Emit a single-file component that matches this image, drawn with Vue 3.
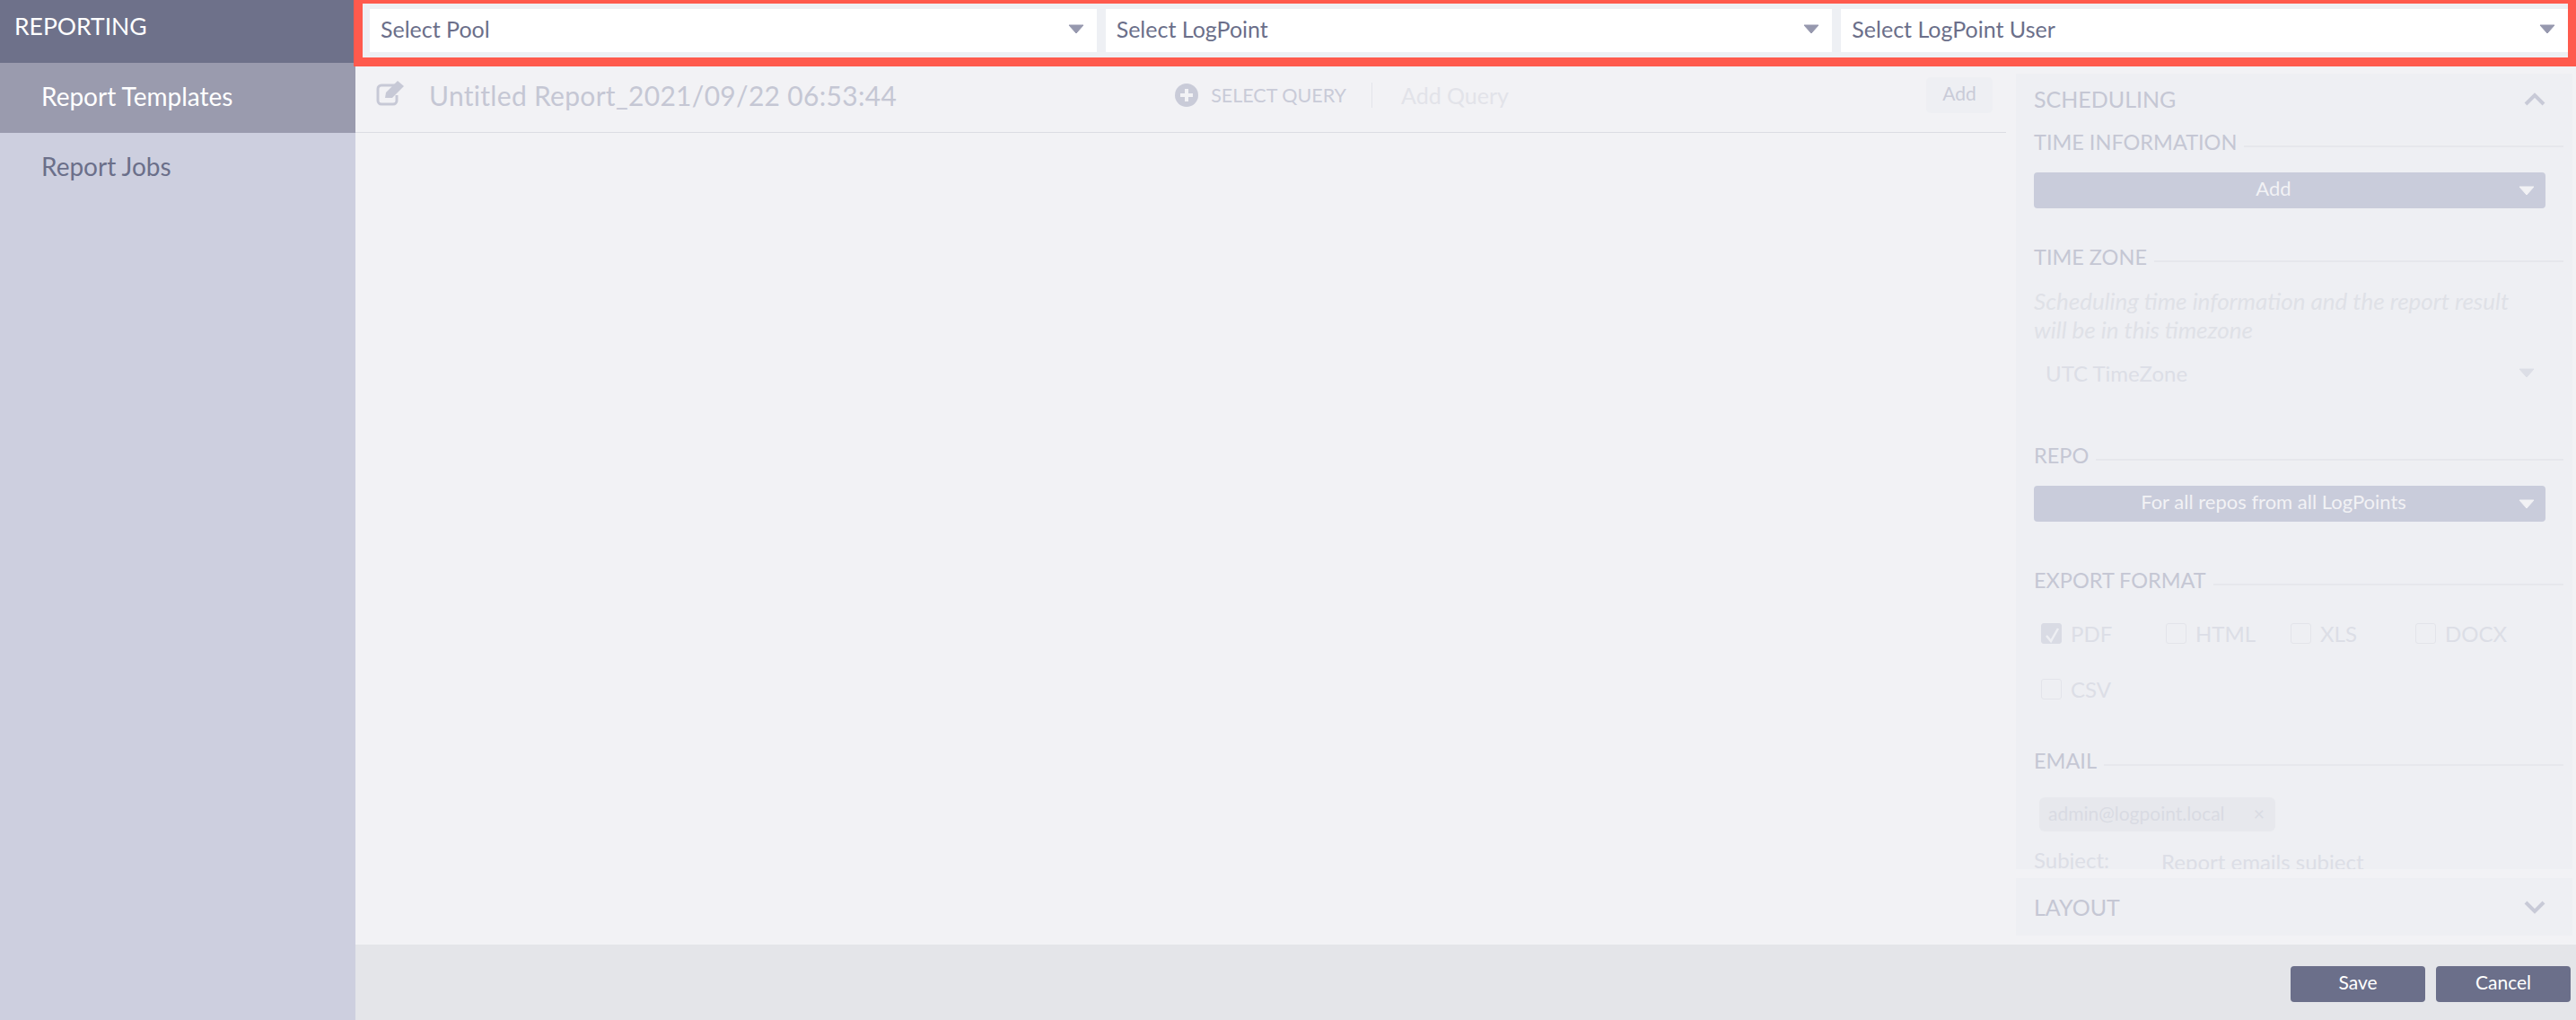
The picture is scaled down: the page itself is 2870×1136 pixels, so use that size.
<template>
  <div class="page">
    <aside class="sidebar">
      <div class="side-title">REPORTING</div>
      <a v-for="item in navItems" :key="item" class="nav-item" :class="{ active: item === 'Report Templates' }">{{ item }}</a>
    </aside>

    <div class="main">
      <!-- highlighted selector strip -->
      <div class="selector-bar">
        <div v-for="s in selectors" :key="s" class="selector">
          <span>{{ s }}</span>
          <svg class="arrow" width="18" height="11" viewBox="0 0 18 11"><path d="M1 1h16l-8 9z" fill="#9698ae" stroke="#9698ae" stroke-linejoin="round" /></svg>
        </div>
      </div>

      <div class="workspace">
        <section class="editor">
          <div class="editor-head">
            <svg class="edit-icon" width="32" height="29" viewBox="0 0 32 29" fill="none">
              <path d="M21 6H6a4 4 0 0 0-4 4v13a4 4 0 0 0 4 4h13a4 4 0 0 0 4-4v-6" stroke="#c7c9d6" stroke-width="3" />
              <path d="M10 20l1-6L24 1l7 6-13 13z" fill="#c7c9d6" />
            </svg>
            <span class="report-name">Untitled Report_2021/09/22 06:53:44</span>
            <div class="query-tools">
              <svg width="26" height="26" viewBox="0 0 26 26"><circle cx="13" cy="13" r="13" fill="#c9cbd8" /><path d="M13 6v14M6 13h14" stroke="#f2f2f5" stroke-width="4" /></svg>
              <span class="select-query">SELECT QUERY</span>
              <i class="divider"></i>
              <span class="add-query">Add Query</span>
            </div>
            <button class="add-btn">Add</button>
          </div>
        </section>

        <aside class="panels">
          <div class="panel scheduling">
            <header class="panel-head">
              <span>SCHEDULING</span>
              <svg width="24" height="15" viewBox="0 0 24 15" fill="none"><path d="M2 13L12 3l10 10" stroke="#c8cad7" stroke-width="4" /></svg>
            </header>

            <div class="field-head first"><span>TIME INFORMATION</span><i></i></div>
            <div class="drop-btn"><span>Add</span><svg class="drop-arrow" width="18" height="11" viewBox="0 0 18 11"><path d="M1 1h16l-8 9z" fill="#f2f2f5" stroke="#f2f2f5" stroke-linejoin="round" /></svg></div>

            <div class="field-head zone"><span>TIME ZONE</span><i></i></div>
            <p class="hint">Scheduling time information and the report result will be in this timezone</p>
            <div class="zone-select">
              <span>UTC TimeZone</span>
              <svg width="18" height="11" viewBox="0 0 18 11"><path d="M1 1h16l-8 9z" fill="#dcdee6" stroke="#dcdee6" stroke-linejoin="round" /></svg>
            </div>

            <div class="field-head repo"><span>REPO</span><i></i></div>
            <div class="drop-btn"><span>For all repos from all LogPoints</span><svg class="drop-arrow" width="18" height="11" viewBox="0 0 18 11"><path d="M1 1h16l-8 9z" fill="#f2f2f5" stroke="#f2f2f5" stroke-linejoin="round" /></svg></div>

            <div class="field-head export"><span>EXPORT FORMAT</span><i></i></div>
            <div class="formats">
              <label v-for="f in formats" :key="f.name" class="format">
                <span class="box" :class="{ checked: f.checked }">
                  <svg v-if="f.checked" width="22" height="22" viewBox="0 0 22 22" fill="none"><path d="M5 11l5 6 8-14" stroke="#eeeff3" stroke-width="2.5" /></svg>
                </span>
                {{ f.name }}
              </label>
            </div>

            <div class="field-head email"><span>EMAIL</span><i></i></div>
            <div class="email-box"><span class="chip">admin@logpoint.local<b>×</b></span></div>
            <div class="subject">
              <span class="subject-label">Subject:</span>
              <span class="subject-input">Report emails subject</span>
            </div>
          </div>

          <div class="panel layout-panel">
            <span>LAYOUT</span>
            <svg width="24" height="15" viewBox="0 0 24 15" fill="none"><path d="M2 2l10 10L22 2" stroke="#c8cad7" stroke-width="4" /></svg>
          </div>
        </aside>
      </div>

      <footer class="footer">
        <button class="foot-btn">Save</button>
        <button class="foot-btn">Cancel</button>
      </footer>
    </div>
  </div>
</template>

<script setup>
const navItems = ['Report Templates', 'Report Jobs']
const selectors = ['Select Pool', 'Select LogPoint', 'Select LogPoint User']
const formats = [
  { name: 'PDF', checked: true },
  { name: 'HTML', checked: false },
  { name: 'XLS', checked: false },
  { name: 'DOCX', checked: false },
  { name: 'CSV', checked: false }
]
</script>

<style>
html, body {
  margin: 0;
  overflow: hidden;
}
</style>

<style scoped>
.page {
  display: grid;
  grid-template-columns: 396px 1fr;
  grid-template-rows: minmax(0, 1fr);
  width: 2870px;
  height: 1136px;
  overflow: hidden;
  font-family: Lato, "Open Sans", sans-serif;
  background: #f2f2f5;
}

.sidebar {
  background: #cdcfdf;
}

.side-title {
  height: 70px;
  padding: 8px 0 0 16px;
  box-sizing: border-box;
  background: #6e718a;
  color: #fff;
  font-size: 26.5px;
  line-height: 42px;
}

.nav-item {
  display: block;
  height: 78px;
  padding-left: 46px;
  color: #6b6f8a;
  font-size: 28px;
  line-height: 74px;
}

.nav-item.active {
  background: #9a9bae;
  color: #fff;
}

.main {
  display: flex;
  flex-direction: column;
  min-width: 0;
  min-height: 0;
}

.selector-bar {
  display: flex;
  flex-shrink: 0;
  gap: 10px;
  height: 74px;
  box-sizing: border-box;
  margin-left: -2px;
  padding: 6px 0;
  padding-left: 8px;
  border: solid #ff5a4d;
  border-width: 4px 9px 10px 10px;
  background: #eef0f4;
}

.selector {
  display: flex;
  flex: 1;
  align-items: center;
  justify-content: space-between;
  padding: 0 14px 4px 12px;
  background: #fff;
  color: #6b6f8a;
  font-size: 25px;
}

.workspace {
  display: flex;
  flex: 1;
  min-height: 0;
}

.editor {
  flex: 1;
  min-width: 0;
}

.editor-head {
  display: flex;
  align-items: center;
  height: 73px;
  padding: 0 15px 0 23px;
  border-bottom: 1px solid #dcdde3;
}

.edit-icon {
  margin-bottom: 14px;
}

.report-name {
  margin-left: 27px;
  margin-bottom: 10px;
  color: #c5c7d4;
  font-size: 30px;
  letter-spacing: 0.3px;
}

.query-tools {
  display: flex;
  align-items: center;
  margin-left: auto;
  margin-right: 465px;
  margin-bottom: 10px;
}

.select-query {
  margin-left: 14px;
  color: #c9cbd8;
  font-size: 21.5px;
}

.divider {
  width: 1px;
  height: 28px;
  margin: 0 32px 0 28px;
  background: #e3e4ea;
}

.add-query {
  color: #e2e3e9;
  font-size: 25px;
}

.add-btn {
  width: 74px;
  height: 40px;
  margin-bottom: 10px;
  padding: 0 0 4px;
  border: 0;
  border-radius: 5px;
  background: #eeeff3;
  color: #c9cbd8;
  font: inherit;
  font-size: 21px;
}

.panels {
  display: flex;
  flex-direction: column;
  gap: 10px;
  width: 620px;
  margin: 8px 4px 10px 11px;
}

.panel {
  background: #eeeff3;
}

.scheduling {
  flex: 1;
  min-height: 0;
  overflow: hidden;
  padding: 0 10px 0 20px;
}

.panel-head {
  display: flex;
  align-items: center;
  justify-content: space-between;
  height: 56px;
  padding-right: 20px;
  color: #c5c7d4;
  font-size: 25px;
}

.field-head {
  display: flex;
  align-items: flex-end;
  gap: 8px;
  height: 24px;
  color: #c5c7d4;
  font-size: 23.5px;
  line-height: 24px;
}

.field-head i {
  flex: 1;
  height: 2px;
  margin-bottom: 6px;
  background: #e6e7ec;
}

.field-head.first { margin-top: 8px; }
.field-head.zone { margin-top: 42px; }
.field-head.repo { margin-top: 50px; }
.field-head.export { margin-top: 53px; }
.field-head.email { margin-top: 32px; }

.drop-btn {
  position: relative;
  display: flex;
  align-items: center;
  justify-content: center;
  width: 570px;
  height: 40px;
  margin-top: 22px;
  padding: 0 36px 6px 0;
  box-sizing: border-box;
  border-radius: 4px;
  background: #c9ccdb;
  color: #f2f2f5;
  font-size: 22px;
}

.drop-arrow {
  position: absolute;
  top: 15px;
  right: 12px;
}

.hint {
  width: 570px;
  margin: 21px 0 0;
  color: #dfe1e7;
  font-size: 26px;
  font-style: italic;
  line-height: 32px;
}

.zone-select {
  display: flex;
  align-items: center;
  justify-content: space-between;
  width: 570px;
  height: 60px;
  margin-top: 2px;
  padding: 0 12px 0 13px;
  box-sizing: border-box;
  color: #dcdee6;
  font-size: 24px;
}

.formats {
  display: grid;
  grid-template-columns: repeat(4, 139px);
  grid-auto-rows: 62px;
  margin: 21px 0 0 8px;
}

.format {
  display: flex;
  align-items: center;
  gap: 10px;
  height: 52px;
  color: #dcdee6;
  font-size: 24px;
}

.box {
  width: 23px;
  height: 23px;
  border: 1px solid #e3e4ea;
  border-radius: 3px;
  box-sizing: border-box;
}

.box.checked {
  background: #d9dbe4;
  border-color: #d9dbe4;
}

.email-box {
  height: 38px;
  margin-top: 29px;
  padding-left: 6px;
}

.chip {
  display: inline-flex;
  justify-content: space-between;
  width: 263px;
  height: 38px;
  padding: 0 12px 0 10px;
  box-sizing: border-box;
  border-radius: 6px;
  background: #e7e8ed;
  color: #d9dbe3;
  font-size: 21px;
  line-height: 36px;
}

.chip b {
  font-weight: 400;
}

/* cut off by the panel's scroll area, same as the real page */
.subject {
  display: flex;
  align-items: baseline;
  margin-top: 17px;
  color: #dcdee6;
  font-size: 24px;
}

.subject-label {
  width: 142px;
}

.subject-input {
  position: relative;
  top: 2px;
}

.layout-panel {
  display: flex;
  flex-shrink: 0;
  align-items: center;
  justify-content: space-between;
  height: 64px;
  padding: 0 30px 0 20px;
  color: #c5c7d4;
  font-size: 25px;
}

.footer {
  display: flex;
  flex-shrink: 0;
  justify-content: flex-end;
  gap: 12px;
  height: 84px;
  padding: 24px 6px 0 0;
  box-sizing: border-box;
  background: #e4e5e9;
}

.foot-btn {
  width: 150px;
  height: 40px;
  padding: 0 0 6px;
  border: 0;
  border-radius: 4px;
  background: #6b6f8a;
  color: #fff;
  font: inherit;
  font-size: 21px;
}
</style>
